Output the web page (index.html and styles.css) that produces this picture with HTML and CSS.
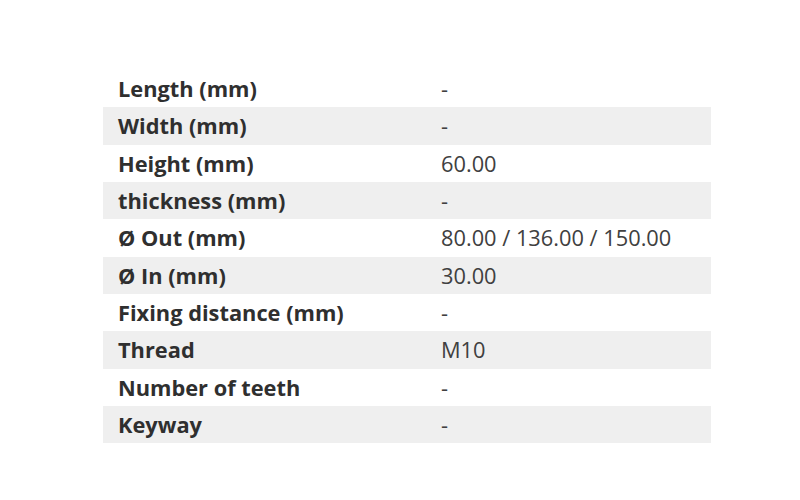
FILE: index.html
```html
<!DOCTYPE html>
<html>
<head>
<meta charset="utf-8">
<link rel="stylesheet" href="styles.css">
</head>
<body>
<div class="wrap">
<table class="specs">
<tbody>
<tr><th>Length (mm)</th><td>-</td></tr>
<tr><th>Width (mm)</th><td>-</td></tr>
<tr><th>Height (mm)</th><td>60.00</td></tr>
<tr><th>thickness (mm)</th><td>-</td></tr>
<tr><th>Ø Out (mm)</th><td>80.00 / 136.00 / 150.00</td></tr>
<tr><th>Ø In (mm)</th><td>30.00</td></tr>
<tr><th>Fixing distance (mm)</th><td>-</td></tr>
<tr><th>Thread</th><td>M10</td></tr>
<tr><th>Number of teeth</th><td>-</td></tr>
<tr><th>Keyway</th><td>-</td></tr>
</tbody>
</table>
</div>
</body>
</html>
```
FILE: styles.css
```css
html, body {
  margin: 0;
  padding: 0;
  background: #ffffff;
}
.wrap {
  padding: 70px 0 0 103px;
}
.specs {
  width: 608px;
  border-collapse: collapse;
  font-family: "Open Sans", sans-serif;
  font-size: 21.8px;
  color: #333;
}
.specs tr {
  height: 37.33px;
}
.specs tr:nth-child(even) {
  background: #efefef;
}
.specs th {
  width: 308px;
  text-align: left;
  font-weight: 700;
  padding: 0 0 0 15px;
  color: #2f2f2f;
}
.specs td {
  padding: 0 0 0 15px;
  color: #404040;
}
```
